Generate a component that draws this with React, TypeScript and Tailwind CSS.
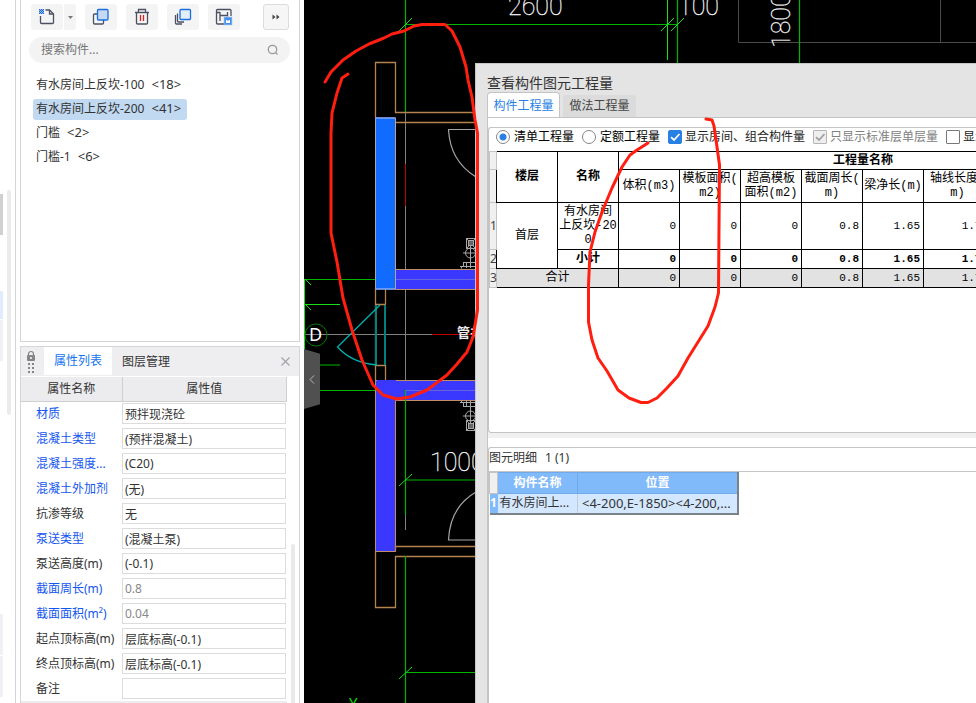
import type { ReactNode } from "react";

const ui = "font-['Noto_Sans','Noto_Sans_CJK_SC',sans-serif]";

type Prop = { id: string; name: string; value: string; tone: "blue" | "dark"; muted?: boolean };

const properties: Prop[] = [
  { id: "material", name: "材质", value: "预拌现浇砼", tone: "blue" },
  { id: "concrete", name: "混凝土类型", value: "(预拌混凝土)", tone: "blue" },
  { id: "strength", name: "混凝土强度...", value: "(C20)", tone: "blue" },
  { id: "additive", name: "混凝土外加剂", value: "(无)", tone: "blue" },
  { id: "seepage", name: "抗渗等级", value: "无", tone: "dark" },
  { id: "pump", name: "泵送类型", value: "(混凝土泵)", tone: "blue" },
  { id: "pumpheight", name: "泵送高度(m)", value: "(-0.1)", tone: "dark" },
  { id: "perimeter", name: "截面周长(m)", value: "0.8", tone: "blue", muted: true },
  { id: "area", name: "截面面积(m²)", value: "0.04", tone: "blue", muted: true },
  { id: "start", name: "起点顶标高(m)", value: "层底标高(-0.1)", tone: "dark" },
  { id: "end", name: "终点顶标高(m)", value: "层底标高(-0.1)", tone: "dark" },
  { id: "remark", name: "备注", value: "", tone: "dark" },
];

const components = [
  { name: "有水房间上反坎-100", count: "<18>" },
  { name: "有水房间上反坎-200", count: "<41>" },
  { name: "门槛", count: "<2>" },
  { name: "门槛-1", count: "<6>" },
];

function ToolButton({ label, children }: { label: string; children: ReactNode }) {
  return (
    <button aria-label={label} className="flex h-[26px] w-8 items-center justify-center rounded-[3px] bg-[#f4f4f4]">
      <svg width="18" height="18" viewBox="0 0 18 18" fill="none" stroke="#4b5162" strokeWidth="1.3">
        {children}
      </svg>
    </button>
  );
}

function Toolbar() {
  return (
    <div className="flex items-center gap-[9px] pt-1 pr-[10px] pl-[10px]">
      <div className="flex gap-px">
        <ToolButton label="新建">
          <path d="M2.500 8V14.500Q2.500 15.500 3.500 15.500H14.500Q15.500 15.500 15.500 14.500V6L11.500 2H7.500" />
          <path d="M11.500 2v4h4" />
          <g fill="#1b6fdd" stroke="none">
            <path d="M1 1h1v1H1zM3 1h1v1H3zM5 1h1v1H5zM2 2h1v1H2zM4 2h1v1H4zM1 3h1v1H1zM3 3h1v1H3zM5 3h1v1H5zM2 4h1v1H2zM4 4h1v1H4zM1 5h1v1H1zM3 5h1v1H3zM5 5h1v1H5z" />
            <rect x="1" y="1" width="5" height="5" opacity="0.450" />
          </g>
        </ToolButton>
        <button aria-label="新建选项" className="flex h-[26px] w-[12px] items-center justify-center rounded-r-[3px] bg-[#f4f4f4]">
          <svg width="5" height="3" viewBox="0 0 5 3" fill="#777">
            <path d="M0 0h5L2.500 3z" />
          </svg>
        </button>
      </div>
      <ToolButton label="复制">
        <path d="M5 6H2.500Q1.500 6 1.500 7v8Q1.500 16 2.500 16H10.500Q11.500 16 11.500 15V12" />
        <rect x="5.500" y="1.500" width="10.500" height="10.500" rx="1" fill="#c5d9f3" stroke="#1b6fdd" />
      </ToolButton>
      <ToolButton label="删除">
        <path d="M2 4.500H16M5.500 4V1.500H12.500V4M3.500 4.500V15Q3.500 16 4.500 16H13.500Q14.500 16 14.500 15V4.500" />
        <path d="M7.500 7v6M10.500 7v6" stroke="#e02020" />
      </ToolButton>
      <ToolButton label="层间复制">
        <path d="M1.500 7V15Q1.500 16 2.500 16H8M3.500 5.500V13Q3.500 14 4.500 14H10" />
        <rect x="6" y="1.500" width="10.500" height="10" rx="1" fill="#e3eefc" stroke="#1b6fdd" />
      </ToolButton>
      <ToolButton label="保存">
        <path d="M9 16H2.500Q1.500 16 1.500 15V2.500Q1.500 1.500 2.500 1.500H15Q16 1.500 16 2.500V8M1.500 4.500H5M5 4V13M5 7.500H12M12.500 4V8.500" />
        <rect x="9.500" y="9.500" width="7" height="7" fill="#3f8ae8" stroke="#6aa7f0" />
        <path d="M11 11.500l1 1h2l1-1v3.500h-4z" fill="#fff" stroke="none" />
      </ToolButton>
      <button aria-label="更多" className="ml-auto flex h-[26px] w-[26px] items-center justify-center rounded-[3px] border border-[#dcdcdc] bg-[#f6f6f6]">
        <svg width="8" height="6" viewBox="0 0 8 6" fill="#444">
          <path d="M0.500 0.500l3 2.500l-3 2.500zM4.500 0.500l3 2.500l-3 2.500z" />
        </svg>
      </button>
    </div>
  );
}

function ComponentPanel() {
  return (
    <section className="flex h-[342px] shrink-0 flex-col border-x border-b border-[#d5d5d8] bg-white">
      <Toolbar />
      <div className="mt-[7px] mr-[9px] ml-2 flex h-[26px] items-center rounded-full bg-[#f3f3f4] pr-[11px] pl-3">
        <input aria-label="搜索构件" placeholder="搜索构件..." className="min-w-0 flex-1 bg-transparent text-xs outline-none placeholder:text-[#757575]" />
        <svg width="12" height="12" viewBox="0 0 12 12" fill="none" stroke="#999" strokeWidth="1.300">
          <circle cx="5.500" cy="5.500" r="4.200" />
          <path d="M8.500 8.500L10.500 10.500" />
        </svg>
      </div>
      <ul className="mt-[10px] ml-3 flex flex-col">
        {components.map((c, i) => (
          <li key={c.name} className="flex h-6 items-center">
            <button
              className={
                i === 1
                  ? "flex h-[21px] items-center gap-[7px] rounded-[3px] bg-[#c1d9f1] pr-[6px] pl-[3px]"
                  : "flex h-[21px] items-center gap-[7px] pr-[6px] pl-[3px]"
              }
            >
              <span>{c.name}</span>
              <span className="text-[13px]">{c.count}</span>
            </button>
          </li>
        ))}
      </ul>
    </section>
  );
}

function PropertyPanel() {
  return (
    <section className="mt-1 flex min-h-0 flex-1 flex-col overflow-hidden border-x border-t border-[#d5d5d8] bg-white">
      <div className="flex h-[29px] shrink-0 items-stretch bg-[#eeeef0]">
        <div className="flex w-[23px] items-center justify-center pr-1">
          <svg width="10" height="24" viewBox="0 0 10 24">
            <path d="M2.500 6V4a2.500 2.500 0 0 1 5 0V6" fill="none" stroke="#858585" strokeWidth="1.200" />
            <rect x="1" y="5" width="8" height="6" rx="1" fill="#858585" />
            <rect x="4" y="7" width="2" height="2" fill="#ddd" />
            <path d="M2 13h2v2H2zM6 13h2v2H6zM2 17h2v2H2zM6 17h2v2H6zM2 21h2v2H2zM6 21h2v2H6z" fill="#858585" />
          </svg>
        </div>
        <button className="mb-px w-[68px] bg-white text-[#1673f0]">属性列表</button>
        <button className="w-[68px]">图层管理</button>
        <button aria-label="关闭" className="ml-auto flex w-[28px] items-center justify-center">
          <svg width="9" height="9" viewBox="0 0 9 9" stroke="#a3a3a8" strokeWidth="1.200">
            <path d="M0.500 0.500L8.500 8.500M8.500 0.500L0.500 8.500" />
          </svg>
        </button>
      </div>
      <div className="mt-px flex min-h-0 flex-1">
        <div className="min-w-0 flex-1">
          <table className="w-full table-fixed border-collapse">
            <thead>
              <tr className="h-6 bg-[#ececee]">
                <th className="w-[101px] border-r border-b border-[#cfcfd2] p-0 font-normal">属性名称</th>
                <th className="border-r border-b border-[#cfcfd2] p-0 font-normal">属性值</th>
              </tr>
            </thead>
            <tbody>
              {properties.map((p) => (
                <tr key={p.id} className="h-[25px]">
                  <td className={p.tone === "blue" ? "p-0 pl-[15px] whitespace-nowrap text-[#1456f0]" : "p-0 pl-[15px] whitespace-nowrap"}>
                    <label htmlFor={p.id}>{p.name}</label>
                  </td>
                  <td className="p-0">
                    <input
                      id={p.id}
                      defaultValue={p.value}
                      className={
                        p.muted
                          ? "block h-[21px] w-[164px] border border-[#dcdcdc] px-[2px] text-xs text-[#888] outline-none"
                          : "block h-[21px] w-[164px] border border-[#dcdcdc] px-[2px] text-xs text-[#333] outline-none"
                      }
                    />
                  </td>
                </tr>
              ))}
            </tbody>
          </table>
          <div className="h-1 bg-[#ececee]" />
        </div>
        <div className="flex w-3 shrink-0 justify-center pt-[167px]">
          <div className="w-1 rounded-t-full bg-[#e9e9e9]" />
        </div>
      </div>
    </section>
  );
}

function Sink() {
  return (
    <g fill="none" stroke="#a8a8a8" strokeWidth="1">
      <rect x="466.500" y="238.500" width="9" height="10" />
      <path d="M467 239L475 248M475 239L467 248" />
      <rect x="468.500" y="240.500" width="5" height="5" fill="#666" />
      <circle cx="470.500" cy="253" r="5" />
      <path d="M463 253h13M470.500 246v22M463.500 262.500h12M460 266.500h16M463.500 262v5M461.500 266.500v2M466.500 262v6" />
    </g>
  );
}

function Drawing() {
  return (
    <svg className="absolute top-0 left-0" width="672" height="703" viewBox="304 0 672 703" fill="none">
      <g stroke="#4a4a4a">
        <path d="M738.500 0V42.500H976M940.500 0V42" />
      </g>
      <g stroke="#808080">
        <path d="M405.500 112V530M304 334.500H476M405 279.500H476M405 390.500H476" />
      </g>
      <g fill="#3a38ff" stroke="#c08d6a">
        <rect x="375.500" y="380.500" width="20" height="171" />
        <path d="M395.500 269.500H477V289.500H395.500zM375.500 380.500H477V400.500H395.500" />
      </g>
      <path d="M396 279.500H476M405 390.500H476" stroke="#6864e0" />
      <path d="M377 381H395V400" stroke="#3a38ff" strokeWidth="2" />
      <g stroke="#b5834f" strokeWidth="1.300">
        <path d="M375.500 118V62.500H395.500V112.500H477M395 122.500H477" />
        <path d="M375.500 289V380M385.500 289V304M375 304.500H386M375 365.500H386M385.500 365V380" />
        <path d="M375.500 551V607.500H395.500V556.500H477M395.500 551V546.500H477" />
      </g>
      <rect x="375.500" y="118" width="20" height="171" fill="#126bff" stroke="#b4a39e" />
      <path d="M375 118H395M376 289H395" stroke="#6f9fff" strokeWidth="1.500" />
      <g stroke="#00b400" strokeWidth="1.200">
        <path d="M405.500 0V112M405.500 390V515M405.500 556V703" />
        <path d="M405 24.500H678M677.500 0V63M799.500 0V63M405 480H477M405 672.500H477M304 390.500H375" />
        <path d="M304 279.500H375M320 365H340" />
      </g>
      <g stroke="#18e018">
        <path d="M667.500 0V60M304.500 279V390M304 304.500H340" />
        <path d="M399 31L412 18M661 31L674 18M671 31L684 18M399 486L412 474M399 679L412 667M305 279L311 285M305 304L311 310" />
      </g>
      <g stroke="#00807f">
        <path d="M376 305V365M385 305V365" strokeWidth="2" />
        <path d="M380 305L337.500 347Q352 363 377 365" stroke="#00b0b0" strokeWidth="1.300" />
      </g>
      <path d="M405.500 164V206M432 334.500H476" stroke="#c00000" />
      <g stroke="#a5a5a5" strokeWidth="1.200">
        <path d="M476 129.500H448.500Q450 161 476 177M476 540H448.500Q450 507 476 492" />
      </g>
      <Sink />
      <g transform="translate(0 669) scale(1 -1)">
        <Sink />
      </g>
      <circle cx="316" cy="335" r="11" stroke="#087808" />
      <g className="font-['Roboto',sans-serif] font-thin" fill="#fff" stroke="#fff" strokeWidth="0.250" fontSize="25">
        <text x="508" y="15">2600</text>
        <text x="678" y="15">100</text>
        <text x="430" y="471">1000</text>
        <text transform="translate(790 48) rotate(-90)">1800</text>
      </g>
      <g className="font-['Noto_Sans','Noto_Sans_CJK_SC',sans-serif]">
        <text x="309" y="341" fontSize="18" fill="#fff">D</text>
        <text x="457" y="337" fontSize="13" fontWeight="bold" fill="#eee">管井</text>
        <text x="349" y="708" fontSize="15" fill="#00e000">Y</text>
      </g>
    </svg>
  );
}

const boxBase = "h-[14px] w-[14px] shrink-0 appearance-none border";

function Tick({ id, label, state }: { id: string; label: string; state: "on" | "disabled" | "off" }) {
  return (
    <div className="flex shrink-0 items-center">
      <span className="relative flex">
        <input
          id={id}
          type="checkbox"
          defaultChecked={state !== "off"}
          disabled={state === "disabled"}
          className={
            state === "on"
              ? `${boxBase} rounded-[2px] border-[#287fe4] bg-[#287fe4]`
              : state === "disabled"
                ? `${boxBase} rounded-[1px] border-[#b5b5b5] bg-[#eeeeee]`
                : `${boxBase} rounded-[1px] border-[#777] bg-white`
          }
        />
        {state !== "off" && (
          <svg className="pointer-events-none absolute inset-0" width="14" height="14" viewBox="0 0 14 14" fill="none" stroke={state === "on" ? "#fff" : "#a0a0a0"} strokeWidth="1.800">
            <path d="M3 7.200L6 10L11.500 4" />
          </svg>
        )}
      </span>
      <label htmlFor={id} className={state === "disabled" ? "pl-[3px] whitespace-nowrap text-[#808080]" : "pl-[3px] whitespace-nowrap text-[#222]"}>
        {label}
      </label>
    </div>
  );
}

function Radio({ id, label, checked }: { id: string; label: string; checked?: boolean }) {
  return (
    <div className="flex shrink-0 items-center">
      <input
        id={id}
        name="mode"
        type="radio"
        defaultChecked={checked}
        className="h-[14px] w-[14px] appearance-none rounded-full border border-[#858585] bg-white checked:bg-[radial-gradient(circle,#287fe4_3px,white_4px)]"
      />
      <label htmlFor={id} className="pl-1 whitespace-nowrap text-black">
        {label}
      </label>
    </div>
  );
}

const metrics = [["体积(m3)"], ["模板面积(", "m2)"], ["超高模板", "面积(m2)"], ["截面周长(", "m)"], ["梁净长(m)"], ["轴线长度(", "m)"]];
const values = ["0", "0", "0", "0.8", "1.65", "1.75"];

const cell = "border border-black p-0";
const num = "border border-black p-0 pr-[3px] text-right text-[11px]";
const idx = "border border-[#c4c4c4] bg-[#f0f0f0] p-0 text-center font-['Noto_Sans',sans-serif] text-xs font-normal text-[#444]";

function QuantityTable() {
  return (
    <table className="w-[502px] table-fixed border-collapse font-['Liberation_Mono','Noto_Sans_CJK_SC',monospace] text-xs leading-[14px] text-black">
      <colgroup>
        <col className="w-[7px]" />
        <col className="w-[61px]" />
        <col className="w-[61px]" />
        <col className="w-[61px]" />
        <col className="w-[61px]" />
        <col className="w-[61px]" />
        <col className="w-[61px]" />
        <col className="w-[61px]" />
        <col className="w-[68px]" />
      </colgroup>
      <thead>
        <tr className="h-[18px]">
          <th className={idx} />
          <th rowSpan={2} className={cell}>楼层</th>
          <th rowSpan={2} className={cell}>名称</th>
          <th colSpan={6} className={`${cell} pl-[122px] text-left`}>
            <span className="block w-[244px] text-center">工程量名称</span>
          </th>
        </tr>
        <tr className="h-[33px]">
          <th className={idx} />
          {metrics.map((lines) => (
            <th key={lines.join("")} className={`${cell} font-normal whitespace-nowrap`}>
              {lines.map((line) => (
                <span key={line} className="block">{line}</span>
              ))}
            </th>
          ))}
        </tr>
      </thead>
      <tbody>
        <tr className="h-[47px]">
          <th className={idx}>1</th>
          <td rowSpan={2} className={`${cell} text-center`}>首层</td>
          <td className={`${cell} text-center`}>
            <span className="block">有水房间</span>
            <span className="block">上反坎-20</span>
            <span className="block">0</span>
          </td>
          {values.map((v, i) => (
            <td key={i} className={num}>{v}</td>
          ))}
        </tr>
        <tr className="h-[19px] font-bold">
          <th className={idx}>2</th>
          <td className={`${cell} text-center`}>小计</td>
          {values.map((v, i) => (
            <td key={i} className={num}>{v}</td>
          ))}
        </tr>
        <tr className="h-[19px] bg-[#e2e2e2]">
          <th className={idx}>3</th>
          <td colSpan={2} className={`${cell} text-center`}>合计</td>
          {values.map((v, i) => (
            <td key={i} className={num}>{v}</td>
          ))}
        </tr>
      </tbody>
    </table>
  );
}

function DetailTable() {
  return (
    <table className="w-[250px] table-fixed border-collapse border-r-2 border-b-2 border-[#7b8188]">
      <thead>
        <tr className="h-[21px] bg-[#81bafb] text-white">
          <th className="w-[8px] border border-[#c4c4c4] bg-[#f0f0f0] p-0" />
          <th className="w-[80px] border border-[#6fa9ea] p-0 font-bold">构件名称</th>
          <th className="border border-[#6fa9ea] p-0 font-bold">位置</th>
        </tr>
      </thead>
      <tbody>
        <tr className="h-5 bg-[#d3e8ff]">
          <th className="bg-[#81bafb] p-0 font-bold text-white">1</th>
          <td className="border-r border-[#c5cbd3] p-0 pl-[2px] whitespace-nowrap">有水房间上...</td>
          <td className="p-0 pl-1 text-[13px] leading-[18px] whitespace-nowrap">{"<4-200,E-1850><4-200,..."}</td>
        </tr>
      </tbody>
    </table>
  );
}

function QuantityDialog() {
  return (
    <section role="dialog" aria-label="查看构件图元工程量" className="absolute top-[63px] right-0 bottom-0 left-[171px] flex flex-col overflow-hidden border-t border-l border-[#c6c6c6] bg-[#e4e4e4] pl-[11px]">
      <h1 className="h-7 shrink-0 pt-2 text-sm leading-[22px] text-[#333]">查看构件图元工程量</h1>
      <div className="flex h-[25px] shrink-0 items-stretch">
        <button className="z-10 w-[73px] rounded-t-[4px] border border-b-0 border-[#c4c4c4] bg-white pt-px text-[#287fe4]">构件工程量</button>
        <button className="mt-[3px] ml-[3px] w-[73px] rounded-t-[3px] bg-[#dbdbdb] text-[#444]">做法工程量</button>
      </div>
      <div className="flex min-h-0 flex-1 flex-col border-t border-l border-[#c4c4c4] bg-white pt-[9px]">
        <div className="h-[306px] shrink-0 overflow-hidden rounded-l-[3px] border-y border-l border-[#c4c4c4]">
          <div className="flex h-[23px] items-center gap-2 overflow-hidden pb-[6px] pl-[7px]">
            <Radio id="list" label="清单工程量" checked />
            <Radio id="quota" label="定额工程量" />
            <Tick id="rooms" label="显示房间、组合构件量" state="on" />
            <Tick id="standard" label="只显示标准层单层量" state="disabled" />
            <Tick id="all" label="显示" state="off" />
          </div>
          <QuantityTable />
        </div>
        <div className="h-[5px] shrink-0 bg-[#f0f0f0]" />
        <div className="mt-[9px] flex min-h-0 flex-1 flex-col rounded-tl-[3px] border-t border-l border-[#c4c4c4]">
          <h2 className="flex h-[24px] shrink-0 gap-2 border-b border-[#c4c4c4] leading-[19px]">
            <span>图元明细</span>
            <span>1 (1)</span>
          </h2>
          <DetailTable />
        </div>
      </div>
    </section>
  );
}

function Markup() {
  return (
    <svg className="pointer-events-none absolute top-0 left-0" width="976" height="703" viewBox="0 0 976 703" fill="none" stroke="#ff1e10" strokeWidth="3" strokeLinejoin="round" strokeLinecap="round">
      <path d="M325 82L331 72L343 60L356 51L369 44L384 38L392 34L404 31L414 26L422 24.500H445L452 31L460 47L466 67L468 80L472 97L475 120L477.500 133V310L473 337L467 352L457 364L447 375L427 390L410 397L397 399L383 395L373 385L362 360L352 330L343 298L337 262L331 233V133L332 113L337 93L342 78L348 74" />
      <path d="M648 143L637 150L630 155L622 167L612 188L602 212L595 232L590 252L588.500 285V322L592 340L598 358L607 371L618 390L629 398L641 402.500H648L657 398L667 388L678 376L688 358L698 342L708 326L715 307L718.500 293L719.500 165L717 147L714 126L712 120L706 119" />
    </svg>
  );
}

export default function App() {
  return (
    <main className={`${ui} relative flex h-screen overflow-hidden bg-white text-xs text-[#333]`}>
      <div className="flex w-4 shrink-0 justify-between border-r border-[#d5d5d8]">
        <div className="flex w-[3px] flex-col">
          <div className="mt-[194px] h-[41px] bg-[#d0d0d0]" />
          <div className="mt-14 h-7 bg-[#dfecff]" />
          <div className="mt-px h-[41px] bg-[#f0f1f5]" />
          <div className="mt-[253px] h-[41px] bg-[#f0f1f5]" />
          <div className="mt-px h-[41px] bg-[#f0f1f5]" />
        </div>
        <div className="mt-[190px] mr-1 h-[225px] w-1 rounded-full bg-[#ebebeb]" />
      </div>
      <aside className="mr-1 ml-1 flex w-[280px] shrink-0 flex-col">
        <ComponentPanel />
        <PropertyPanel />
      </aside>
      <div className="relative min-w-0 flex-1 overflow-hidden bg-black">
        <Drawing />
        <button aria-label="收起" className="absolute top-[349px] left-0 flex h-[60px] w-4 items-center justify-center bg-[#505050] [clip-path:polygon(0_0,100%_8%,100%_92%,0_100%)]">
          <svg width="6" height="9" viewBox="0 0 6 9" fill="none" stroke="#b8b8b8">
            <path d="M5 0.500L1 4.500L5 8.500" />
          </svg>
        </button>
        <QuantityDialog />
      </div>
      <Markup />
    </main>
  );
}
